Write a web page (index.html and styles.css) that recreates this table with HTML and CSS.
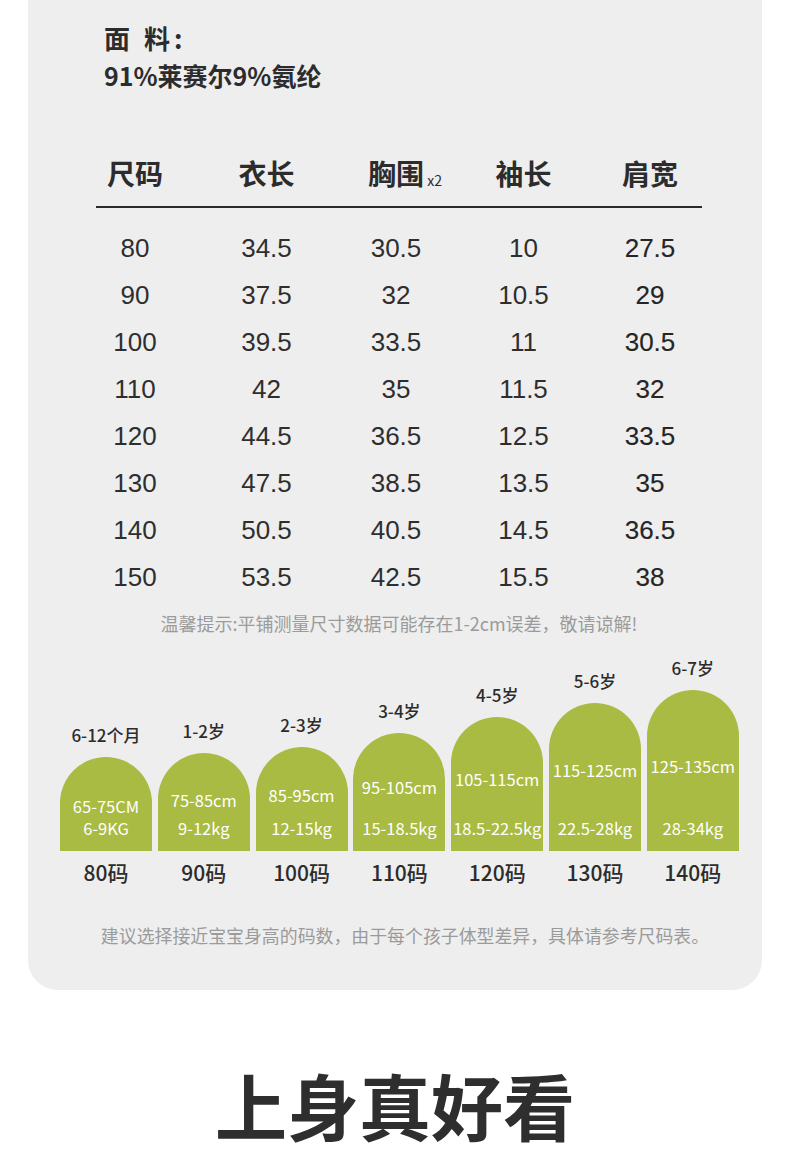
FILE: index.html
```html
<!DOCTYPE html>
<html lang="zh-CN">
<head>
<meta charset="utf-8">
<title>尺码表</title>
<link rel="stylesheet" href="styles.css">
</head>
<body>
<div class="card">
  <div class="fabric">
    <div class="fabric-title">面 料:</div>
    <div class="fabric-value">91%莱赛尔9%氨纶</div>
  </div>

  <div class="size-table">
    <div class="thead">
      <div class="th">尺码</div>
      <div class="th">衣长</div>
      <div class="th">胸围<span class="sub">x2</span></div>
      <div class="th">袖长</div>
      <div class="th">肩宽</div>
    </div>
    <div class="rule"></div>
    <div class="tbody">
      <div class="td">80</div><div class="td">34.5</div><div class="td">30.5</div><div class="td">10</div><div class="td last">27.5</div>
      <div class="td">90</div><div class="td">37.5</div><div class="td">32</div><div class="td">10.5</div><div class="td last">29</div>
      <div class="td">100</div><div class="td">39.5</div><div class="td">33.5</div><div class="td">11</div><div class="td last">30.5</div>
      <div class="td">110</div><div class="td">42</div><div class="td">35</div><div class="td">11.5</div><div class="td last">32</div>
      <div class="td">120</div><div class="td">44.5</div><div class="td">36.5</div><div class="td">12.5</div><div class="td last">33.5</div>
      <div class="td">130</div><div class="td">47.5</div><div class="td">38.5</div><div class="td">13.5</div><div class="td last">35</div>
      <div class="td">140</div><div class="td">50.5</div><div class="td">40.5</div><div class="td">14.5</div><div class="td last">36.5</div>
      <div class="td">150</div><div class="td">53.5</div><div class="td">42.5</div><div class="td">15.5</div><div class="td last">38</div>
    </div>
  </div>

  <p class="tip">温馨提示:平铺测量尺寸数据可能存在1-2cm误差，敬请谅解!</p>

  <div class="ages">
    <div class="age">
      <div class="age-label">6-12个月</div>
      <div class="arch" style="--h:94px;--gap:2px"><span>65-75CM</span><span>6-9KG</span></div>
      <div class="code">80码</div>
    </div>
    <div class="age">
      <div class="age-label">1-2岁</div>
      <div class="arch" style="--h:98px;--gap:8px"><span>75-85cm</span><span>9-12kg</span></div>
      <div class="code">90码</div>
    </div>
    <div class="age">
      <div class="age-label">2-3岁</div>
      <div class="arch" style="--h:104px;--gap:13px"><span>85-95cm</span><span>12-15kg</span></div>
      <div class="code">100码</div>
    </div>
    <div class="age">
      <div class="age-label">3-4岁</div>
      <div class="arch" style="--h:118px;--gap:21px"><span>95-105cm</span><span>15-18.5kg</span></div>
      <div class="code">110码</div>
    </div>
    <div class="age">
      <div class="age-label">4-5岁</div>
      <div class="arch" style="--h:134px;--gap:29px"><span>105-115cm</span><span>18.5-22.5kg</span></div>
      <div class="code">120码</div>
    </div>
    <div class="age">
      <div class="age-label">5-6岁</div>
      <div class="arch" style="--h:148px;--gap:38px"><span>115-125cm</span><span>22.5-28kg</span></div>
      <div class="code">130码</div>
    </div>
    <div class="age">
      <div class="age-label">6-7岁</div>
      <div class="arch" style="--h:161px;--gap:42px"><span>125-135cm</span><span>28-34kg</span></div>
      <div class="code">140码</div>
    </div>
  </div>

  <p class="advice">建议选择接近宝宝身高的码数，由于每个孩子体型差异，具体请参考尺码表。</p>
</div>

<h1 class="title">上身真好看</h1>
</body>
</html>
```

FILE: styles.css
```css
* {
  box-sizing: border-box;
}

html, body {
  margin: 0;
  padding: 0;
  background: #ffffff;
}

body {
  font-family: "Noto Sans CJK SC", "Noto Sans", sans-serif;
  color: #2c2c2c;
  width: 790px;
}

.card {
  margin: 0 28px;
  background: #eeeeee;
  border-radius: 0 0 30px 30px;
  padding: 22px 0 44px;
}

/* fabric */
.fabric {
  padding-left: 76px;
}

.fabric-title {
  font-size: 26px;
  font-weight: 700;
  line-height: 32px;
  letter-spacing: 4px;
}

.fabric-value {
  margin-top: 5px;
  font-size: 25px;
  font-weight: 700;
  line-height: 32px;
}

/* table */
.size-table {
  margin-top: 62px;
}

.thead,
.tbody {
  display: grid;
  grid-template-columns: 132px 131px 128px 127px 126px;
  margin-left: 41px;
}

.th {
  text-align: center;
  font-size: 28px;
  font-weight: 700;
  line-height: 40px;
  white-space: nowrap;
}

.sub {
  display: inline-block;
  width: 18px;
  margin-right: -18px;
  font-size: 14px;
  font-weight: 400;
  text-align: right;
  line-height: 14px;
  vertical-align: -1px;
}

.rule {
  height: 2px;
  background: #2a2a2a;
  margin: 13px 60px 0 68px;
}

.tbody {
  margin-top: 17px;
  grid-auto-rows: 47px;
}

.td {
  display: flex;
  align-items: center;
  justify-content: center;
  font-family: "Liberation Sans", Arial, sans-serif;
  font-size: 26px;
  color: #2e2e2e;
}

.td.last {
  color: #252525;
  -webkit-text-stroke: 0.15px #252525;
}

/* tip */
.tip {
  margin: 11px 0 0;
  padding-left: 8px;
  text-align: center;
  font-size: 18px;
  line-height: 22px;
  color: #9b9b9b;
}

/* age arches */
.ages {
  margin-top: 23px;
  padding-left: 32px;
  display: flex;
  align-items: flex-end;
  gap: 5.8px;
}

.age {
  width: 92px;
  display: flex;
  flex-direction: column;
  align-items: center;
}

.age-label {
  font-size: 17px;
  font-weight: 500;
  line-height: 22px;
  white-space: nowrap;
  color: #2c2c2c;
}

.arch {
  margin-top: 11px;
  width: 92px;
  height: var(--h);
  background: #a9bb42;
  border-radius: 46px 46px 0 0;
  display: flex;
  flex-direction: column;
  justify-content: flex-end;
  align-items: center;
  gap: var(--gap);
  padding-bottom: 13px;
  color: #ffffff;
  font-size: 16.5px;
  line-height: 20px;
  white-space: nowrap;
}

.code {
  margin-top: 9px;
  font-size: 21px;
  font-weight: 500;
  line-height: 24px;
  color: #2c2c2c;
}

/* advice */
.advice {
  margin: 40px 0 0;
  padding-left: 20px;
  text-align: center;
  font-size: 17.9px;
  line-height: 22px;
  color: #9b9b9b;
}

/* title */
.title {
  margin: 74px 0 0;
  text-align: center;
  font-size: 72px;
  font-weight: 700;
  line-height: 80px;
  color: #2e2e2e;
}
```
